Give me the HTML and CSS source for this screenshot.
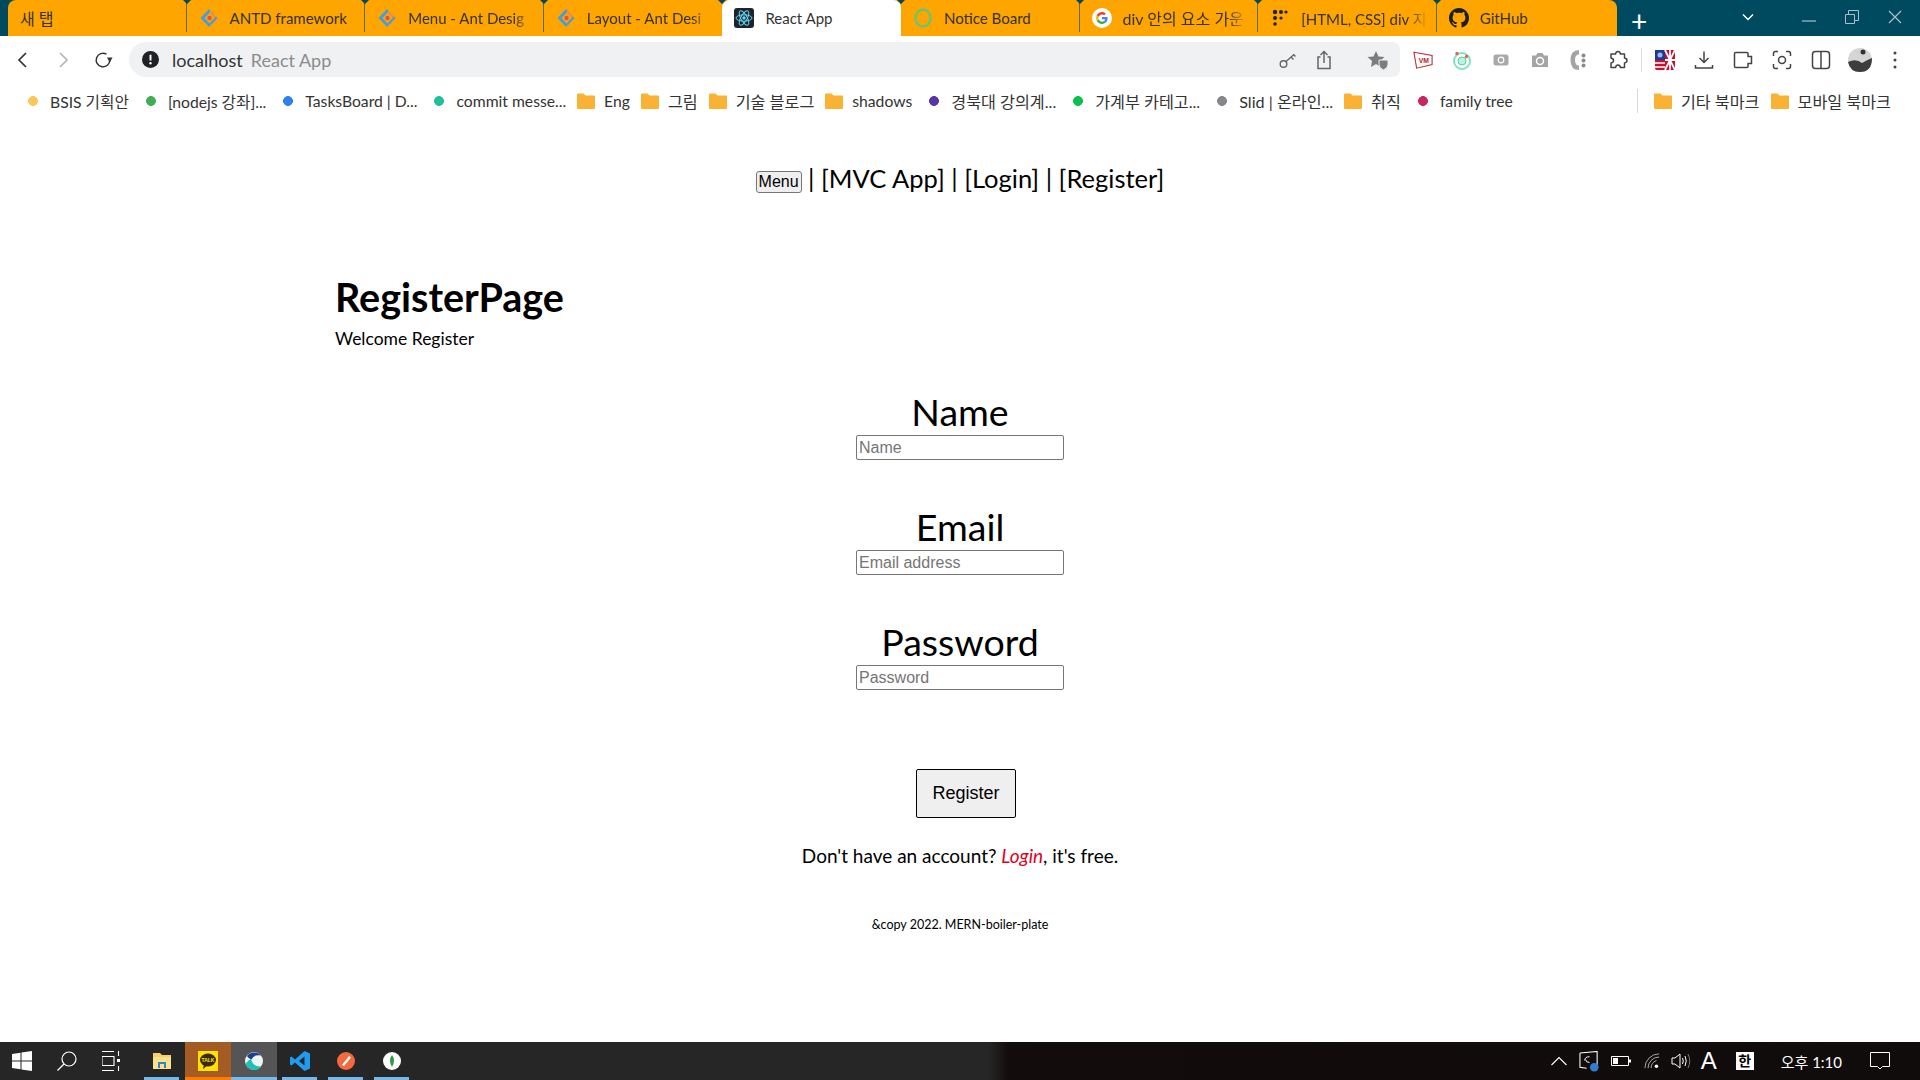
FILE: index.html
```html
<!DOCTYPE html>
<html lang="en">
<head>
    <meta charset="UTF-8">
    <title>React App</title>
    <link rel="stylesheet" href="styles.css">
</head>
<body>
    <svg class="defs" width="0" height="0">
        <defs>
            <symbol id="ant" viewBox="0 0 20 20">
                <path d="M11.500 2.500 L10 1 L1.500 10 L10 19 L12 17 L5.500 10 L10 5.500 Z" fill="#3f9fe0"/>
                <path d="M12 3 L18.500 10 L12 17 L10.500 15.500 L15.500 10 L10.500 4.500 Z" fill="#ef8a4a"/>
                <path d="M12 17 L18.500 10 L17 8.500 L10.500 15.500 Z" fill="#3f9fe0"/>
                <circle cx="10.500" cy="10" r="2.200" fill="#e8523a"/>
            </symbol>
            <symbol id="folder" viewBox="0 0 18 16">
                <path d="M0 1.5 Q0 .5 1 .5 H6.5 L8.5 2.5 H17 Q18 2.5 18 3.5 V15 Q18 16 17 16 H1 Q0 16 0 15 Z" fill="#f9b233"/>
            </symbol>
        </defs>
    </svg>

    <div class="tabstrip">
        <div class="tabs">
            <div class="tab sep"><span class="tab-title ko">새 탭</span></div>
            <div class="tab sep"><svg class="favicon"><use href="#ant"/></svg><span class="tab-title">ANTD framework</span></div>
            <div class="tab sep"><svg class="favicon"><use href="#ant"/></svg><span class="tab-title fade">Menu - Ant Desig</span></div>
            <div class="tab"><svg class="favicon"><use href="#ant"/></svg><span class="tab-title fade">Layout - Ant Desi</span></div>
            <div class="tab active">
                <svg class="favicon" viewBox="0 0 20 20">
                    <rect width="20" height="20" rx="3" fill="#20232a"/>
                    <g fill="none" stroke="#61dafb" stroke-width="1">
                        <ellipse cx="10" cy="10" rx="8" ry="3.2"/>
                        <ellipse cx="10" cy="10" rx="8" ry="3.2" transform="rotate(60 10 10)"/>
                        <ellipse cx="10" cy="10" rx="8" ry="3.2" transform="rotate(120 10 10)"/>
                    </g>
                    <circle cx="10" cy="10" r="1.7" fill="#61dafb"/>
                </svg>
                <span class="tab-title">React App</span>
            </div>
            <div class="tab sep">
                <svg class="favicon" viewBox="0 0 20 20"><ellipse cx="10" cy="10" rx="7.5" ry="8.5" fill="none" stroke="#6cc56f" stroke-width="2.6"/></svg>
                <span class="tab-title">Notice Board</span>
            </div>
            <div class="tab sep">
                <svg class="favicon" viewBox="0 0 20 20">
                    <circle cx="10" cy="10" r="10" fill="#fff"/>
                    <path d="M15.6 10.2c0-.5 0-.9-.1-1.3H10v2.4h3.2c-.1.8-.6 1.4-1.2 1.8l1.9 1.5c1.1-1 1.7-2.500 1.700-4.400z" fill="#4285f4"/>
                    <path d="M10 16c1.600 0 2.900-.5 3.900-1.400L12 13.100c-.5.400-1.200.600-2 .600-1.500 0-2.800-1-3.300-2.400l-2 1.500C5.700 14.800 7.700 16 10 16z" fill="#34a853"/>
                    <path d="M6.700 11.300c-.3-.8-.3-1.800 0-2.600l-2-1.500c-.9 1.700-.9 3.900 0 5.600z" fill="#fbbc05"/>
                    <path d="M10 6.400c.9 0 1.600.3 2.200.9l1.700-1.700C12.900 4.600 11.600 4 10 4 7.700 4 5.700 5.300 4.700 7.200l2 1.500C7.200 7.400 8.500 6.400 10 6.400z" fill="#ea4335"/>
                </svg>
                <span class="tab-title fade ko">div 안의 요소 가운</span>
            </div>
            <div class="tab sep">
                <svg class="favicon" viewBox="0 0 20 20" fill="#222">
                    <circle cx="5" cy="4" r="2.200"/><circle cx="11" cy="4" r="2"/><circle cx="16" cy="4" r="1.600"/>
                    <circle cx="5" cy="10" r="2"/><circle cx="11" cy="10" r="1.600"/><circle cx="5" cy="16" r="1.800"/>
                </svg>
                <span class="tab-title fade">[HTML, CSS] div 지</span>
            </div>
            <div class="tab last">
                <svg class="favicon" viewBox="0 0 16 16"><path fill="#1b1f23" d="M8 0C3.580 0 0 3.580 0 8c0 3.540 2.290 6.530 5.470 7.590.4.070.55-.17.55-.38 0-.19-.01-.82-.01-1.490-2.010.37-2.530-.49-2.690-.94-.09-.23-.48-.94-.82-1.130-.28-.15-.68-.52-.01-.53.63-.01 1.080.58 1.230.82.720 1.210 1.870.870 2.330.660.070-.520.280-.870.510-1.070-1.780-.200-3.640-.890-3.640-3.950 0-.870.310-1.590.820-2.150-.080-.200-.360-1.020.080-2.120 0 0 .670-.210 2.200.820.640-.180 1.320-.270 2-.270s1.360.090 2 .270c1.530-1.040 2.200-.820 2.200-.820.440 1.100.160 1.920.080 2.120.510.560.820 1.270.820 2.150 0 3.070-1.870 3.750-3.650 3.950.290.250.540.730.540 1.480 0 1.070-.010 1.930-.010 2.200 0 .210.150.460.550.380A8.010 8.010 0 0 0 16 8c0-4.420-3.580-8-8-8z"/></svg>
                <span class="tab-title">GitHub</span>
            </div>
        </div>
        <span class="new-tab">+</span>
        <div class="win-controls">
            <svg class="win-ic chev" viewBox="0 0 14 14"><path d="M2 4.500 L7 9.500 L12 4.500" fill="none" stroke="#fff" stroke-width="1.400"/></svg>
            <svg class="win-ic dim" viewBox="0 0 14 14"><path d="M0 11 H14" stroke="#8fb0bb" stroke-width="1.400"/></svg>
            <svg class="win-ic dim" viewBox="0 0 14 14"><path d="M.5 4.500 H9.500 V13.500 H.5 Z M3.500 4.500 V.5 H13.500 V10.500 H9.500" fill="none" stroke="#a9c2ca"/></svg>
            <svg class="win-ic dim" viewBox="0 0 14 14"><path d="M1 1 L13 13 M13 1 L1 13" stroke="#a9c2ca" stroke-width="1.200"/></svg>
        </div>
    </div>

    <div class="toolbar">
        <svg class="nav-ic" viewBox="0 0 20 20"><path d="M13 3 L6 10 L13 17" fill="none" stroke="#333" stroke-width="1.700"/></svg>
        <svg class="nav-ic" viewBox="0 0 20 20"><path d="M7 3 L14 10 L7 17" fill="none" stroke="#b5b5b5" stroke-width="1.700"/></svg>
        <svg class="nav-ic" viewBox="0 0 20 20"><path d="M16.800 10 A6.800 6.800 0 1 1 13.500 4.200" fill="none" stroke="#333" stroke-width="1.500"/><path d="M14 7.500 L19.500 7.500 L16.800 12.500 Z" fill="#333"/></svg>
        <div class="omnibox">
            <svg class="info" viewBox="0 0 16 16"><circle cx="8" cy="8" r="8" fill="#202124"/><path d="M8 3.500 V9" stroke="#fff" stroke-width="1.800"/><circle cx="8" cy="11.500" r="1.100" fill="#fff"/></svg>
            <span class="host">localhost</span>
            <span class="page-title">React App</span>
            <div class="omni-right">
                <svg class="tool-ic key" viewBox="0 0 20 20"><circle cx="5.500" cy="14" r="3.300" fill="none" stroke="#666" stroke-width="1.400"/><path d="M8 11.500 L16 4.500 M13 7 L15.500 9.500 M15.500 4.500 L17.500 6.500" fill="none" stroke="#666" stroke-width="1.400"/></svg>
                <svg class="tool-ic share" viewBox="0 0 20 20"><path d="M6.500 7 H4 V18.500 H16 V7 H13.500 M10 13 V1.500 M6.500 5 L10 1.500 L13.500 5" fill="none" stroke="#666" stroke-width="1.500"/></svg>
                <svg class="tool-ic star" viewBox="0 0 22 20"><path d="M9 1 L11.500 6.500 L17.500 7 L13 11 L14 17 L9 14 L4 17 L5 11 L.5 7 L6.500 6.500 Z" fill="#7d7d7d"/><path d="M12 10 H21 V14.500 Q21 18 16.500 20 Q12 18 12 14.500 Z" fill="#7d7d7d" stroke="#eff1f3"/></svg>
            </div>
        </div>
        <div class="ext-icons">
            <svg class="tool-ic" viewBox="0 0 22 20"><path d="M1 1.500 L21 5 V15 L4 19 Z" fill="#fff" stroke="#b5303a" stroke-width="1.200"/><text x="12" y="13.500" class="vm">VM</text></svg>
            <svg class="tool-ic" viewBox="0 0 20 20"><circle cx="10" cy="11" r="8" fill="none" stroke="#7fe3c0" stroke-width="2"/><circle cx="10" cy="11" r="4" fill="#bdf3dd" stroke="#55cfa0"/><circle cx="5" cy="3.500" r="1.700" fill="#e0664f"/><circle cx="14.500" cy="6.500" r="1.700" fill="#e0664f"/></svg>
            <svg class="tool-ic" viewBox="0 0 20 20"><rect x="2.500" y="4.500" width="15" height="11" rx="2.500" fill="#a9a9a9"/><circle cx="10" cy="10" r="2.800" fill="none" stroke="#fff" stroke-width="1.200"/></svg>
            <svg class="tool-ic" viewBox="0 0 20 20"><path d="M2 5.500 H6 L7.500 3 H12.500 L14 5.500 H18 V17 H2 Z" fill="#a4a4a4"/><circle cx="10" cy="11" r="3.500" fill="#a4a4a4" stroke="#fff" stroke-width="1.500"/></svg>
            <svg class="tool-ic" viewBox="0 0 20 20"><path d="M10 0 Q1.500 0 1.500 10 Q1.500 20 10 20 V15.500 Q6 15.500 6 10 Q6 4.500 10 4.500 Z" fill="#a4a4a4"/><g fill="#8a8a8a"><circle cx="14.500" cy="5.500" r="2"/><circle cx="14.500" cy="10.500" r="2"/><circle cx="14.500" cy="15.500" r="2"/></g></svg>
            <svg class="tool-ic" viewBox="0 0 20 20"><path d="M7.500 4 Q8 1.500 10 1.500 Q12 1.500 12.500 4 H16.500 V8 Q19 8.500 19 10.500 Q19 12.500 16.500 13 V17.500 H12.500 Q12 15 10 15 Q8 15 7.500 17.500 H3 V13 Q5.500 12.500 5.500 10.500 Q5.500 8.500 3 8 V4 Z" fill="none" stroke="#444" stroke-width="1.500" stroke-linejoin="round"/></svg>
            <span class="tool-sep"></span>
            <svg class="tool-ic" viewBox="0 0 20 20"><rect width="20" height="20" rx="2" fill="#c8102e"/><rect width="10" height="10" fill="#1f3a93"/><path d="M10 0 L20 20 M20 0 L10 20 M15 0 V20 M10 10 H20" stroke="#fff" stroke-width="1.800"/><path d="M0 13 H10 M0 17 H10" stroke="#fff" stroke-width="1.400"/><circle cx="5" cy="5" r="2.500" fill="#9ab8ff"/></svg>
            <svg class="tool-ic" viewBox="0 0 20 20"><path d="M10 1.500 V12.500 M5.500 8 L10 12.500 L14.500 8 M1.500 15 V18 H18.500 V15" fill="none" stroke="#444" stroke-width="1.500"/></svg>
            <svg class="tool-ic" viewBox="0 0 20 20"><path d="M15 6.500 V3.500 Q15 2.500 14 2.500 H2.500 Q1.500 2.500 1.500 3.500 V16.500 Q1.500 17.500 2.500 17.500 H14 Q15 17.500 15 16.500 V13.500 L18.500 13.500 V6.500 Z" fill="none" stroke="#444" stroke-width="1.500"/></svg>
            <svg class="tool-ic" viewBox="0 0 20 20"><path d="M1.500 6 V3.500 Q1.500 1.500 3.500 1.500 H6 M14 1.500 H16.500 Q18.500 1.500 18.500 3.500 V6 M18.500 14 V16.500 Q18.500 18.500 16.500 18.500 H14 M6 18.500 H3.500 Q1.500 18.500 1.500 16.500 V14" fill="none" stroke="#444" stroke-width="1.500"/><circle cx="10" cy="10" r="3.500" fill="none" stroke="#444" stroke-width="1.500"/></svg>
            <svg class="tool-ic" viewBox="0 0 20 20"><rect x="1.500" y="1.500" width="17" height="17" rx="3" fill="none" stroke="#444" stroke-width="1.500"/><path d="M10 1.500 V18.500" stroke="#444" stroke-width="1.500"/></svg>
            <svg class="tool-ic avatar" viewBox="0 0 24 24"><circle cx="12" cy="12" r="12" fill="#d5d5d5"/><path d="M0 14 Q8 10 14 15 Q19 12 24 10 Q24 24 12 24 Q2 24 0 14 Z" fill="#3d3d3d"/><circle cx="15" cy="4" r="2.500" fill="#333"/></svg>
            <svg class="tool-ic dots" viewBox="0 0 4 20"><g fill="#444"><circle cx="2" cy="3" r="1.500"/><circle cx="2" cy="10" r="1.500"/><circle cx="2" cy="17" r="1.500"/></g></svg>
        </div>
    </div>

    <div class="bookmarks">
        <span class="bm"><i class="dot c-yellow"></i>BSIS 기획안</span>
        <span class="bm"><i class="dot c-green"></i>[nodejs 강좌]...</span>
        <span class="bm"><i class="dot c-blue"></i>TasksBoard | D...</span>
        <span class="bm"><i class="dot c-teal"></i>commit messe...</span>
        <span class="bm"><svg class="folder"><use href="#folder"/></svg>Eng</span>
        <span class="bm"><svg class="folder"><use href="#folder"/></svg><span class="ko">그림</span></span>
        <span class="bm"><svg class="folder"><use href="#folder"/></svg><span class="ko">기술 블로그</span></span>
        <span class="bm"><svg class="folder"><use href="#folder"/></svg>shadows</span>
        <span class="bm"><i class="dot c-purple"></i><span class="ko">경북대 강의계...</span></span>
        <span class="bm"><i class="dot c-lime"></i><span class="ko">가계부 카테고...</span></span>
        <span class="bm"><i class="dot c-gray"></i><span class="ko">Slid | 온라인...</span></span>
        <span class="bm"><svg class="folder"><use href="#folder"/></svg><span class="ko">취직</span></span>
        <span class="bm"><i class="dot c-pink"></i>family tree</span>
        <span class="bm-right">
            <span class="bm"><svg class="folder"><use href="#folder"/></svg><span class="ko">기타 북마크</span></span>
            <span class="bm"><svg class="folder"><use href="#folder"/></svg><span class="ko">모바일 북마크</span></span>
        </span>
    </div>

    <div class="page">
        <nav class="site-nav">
            <button class="menu-btn">Menu</button> | [MVC App] | [Login] | [Register]
        </nav>
        <main class="content">
            <h1>RegisterPage</h1>
            <p class="welcome">Welcome Register</p>
            <form class="reg-form">
                <div class="field">
                    <label for="name">Name</label>
                    <input id="name" type="text" placeholder="Name">
                </div>
                <div class="field">
                    <label for="email">Email</label>
                    <input id="email" type="email" placeholder="Email address">
                </div>
                <div class="field">
                    <label for="password">Password</label>
                    <input id="password" type="password" placeholder="Password">
                </div>
                <button class="submit" type="button">Register</button>
            </form>
            <p class="account">Don't have an account? <a class="login-link">Login</a>, it's free.</p>
        </main>
        <footer class="copy">&amp;copy 2022. MERN-boiler-plate</footer>
    </div>

    <div class="taskbar">
        <div class="task-left">
            <svg class="sys start" viewBox="0 0 20 20"><path d="M0 3 L8.500 1.800 V9.500 H0 Z M9.500 1.600 L20 0 V9.500 H9.500 Z M0 10.500 H8.500 V18.200 L0 17 Z M9.500 10.500 H20 V20 L9.500 18.400 Z" fill="#fff"/></svg>
            <svg class="sys search" viewBox="0 0 20 20"><circle cx="12" cy="8" r="7" fill="none" stroke="#fff" stroke-width="1.200"/><path d="M7 13 L.5 19.500" stroke="#fff" stroke-width="1.200"/></svg>
            <svg class="sys taskview" viewBox="0 0 20 20"><path d="M0 .5 H12 M0 19.500 H12 M0 5.500 H12 V14.500 H0 Z M16.500 0 V5 M16.500 15 V20" fill="none" stroke="#fff" stroke-width="1.100"/><rect x="15" y="8" width="3" height="3" fill="#fff"/></svg>
            <div class="app running">
                <svg class="app-ic" viewBox="0 0 20 20"><path d="M1 2 H8 L10 4 H19 V18 H1 Z" fill="#f6cf66"/><rect x="1" y="6" width="18" height="12" fill="#fbe08e"/><path d="M6 17 V11 H14 V17 H12 V13 H8 V17 Z" fill="#2f86c9"/></svg>
            </div>
            <div class="app kakao">
                <svg class="app-ic" viewBox="0 0 20 20"><rect width="20" height="20" fill="#ffe100"/><ellipse cx="10" cy="9" rx="8" ry="6.500" fill="#3a2a1b"/><path d="M6 13 L5 18 L10 14 Z" fill="#3a2a1b"/><text x="10" y="11" class="talk">TALK</text></svg>
            </div>
            <div class="app whale">
                <svg class="app-ic" viewBox="0 0 20 20"><circle cx="10" cy="10" r="9" fill="#eef6f4"/><path d="M1.500 13 A9 9 0 0 0 17 15.500 Q9 16 7 8 Q4 9 1.500 13 Z" fill="#1fc0b5"/><path d="M3 5 A9 9 0 0 1 17 4.500 Q10 3 7.500 8.500 Q4.500 8 3 5 Z" fill="#1d3f8f"/></svg>
            </div>
            <div class="app running">
                <svg class="app-ic" viewBox="0 0 20 20"><path d="M14.500 0 L20 2.500 V17.500 L14.500 20 L5 11.500 L1.500 14.500 L0 13.500 V6.500 L1.500 5.500 L5 8.500 Z M14.500 5.500 L9 10 L14.500 14.500 Z" fill="#1f9cf0"/></svg>
            </div>
            <div class="app running">
                <svg class="app-ic" viewBox="0 0 20 20"><circle cx="10" cy="10" r="9" fill="#f4693d"/><path d="M6 14 L13 5 L15 6.500 L8 15 Z" fill="#fff"/></svg>
            </div>
            <div class="app running">
                <svg class="app-ic" viewBox="0 0 20 20"><circle cx="10" cy="10" r="9" fill="#fff"/><path d="M10 4 Q14 9 10 16 Q6 9 10 4 Z" fill="#2f9a4a"/></svg>
            </div>
        </div>
        <div class="tray">
            <svg class="tray-ic chevron" viewBox="0 0 16 10"><path d="M.5 9 L8 1.500 L15.500 9" fill="none" stroke="#fff" stroke-width="1.100"/></svg>
            <svg class="tray-ic sync" viewBox="0 0 22 22"><path d="M1 2 L19 .5 V16 M1 2 V17 L8 18" fill="none" stroke="#fff" stroke-width="1.100"/><path d="M6 10 Q6 6 11 6 M11 12 Q7 12 7 9" fill="none" stroke="#fff"/><circle cx="16" cy="17" r="4.500" fill="#2d7cd6"/></svg>
            <svg class="tray-ic batt" viewBox="0 0 20 12"><path d="M.5 1.500 H17.500 V10.500 H.5 Z" fill="none" stroke="#fff"/><rect x="2" y="3" width="5" height="6" fill="#fff"/><rect x="18" y="4.500" width="2" height="3" fill="#fff"/></svg>
            <svg class="tray-ic wifi" viewBox="0 0 18 18"><path d="M1 17 A16 16 0 0 1 17 1 M4.500 17 A12.500 12.500 0 0 1 17 4.500 M8 17 A9 9 0 0 1 14 8.500" fill="none" stroke="#bbb"/><circle cx="14" cy="15" r="2" fill="#fff"/></svg>
            <svg class="tray-ic vol" viewBox="0 0 20 16"><path d="M1 5 H4 L9 1 V15 L4 11 H1 Z" fill="none" stroke="#fff"/><path d="M11.500 5 Q13 8 11.500 11 M14 3 Q16.500 8 14 13" fill="none" stroke="#fff"/><path d="M17 1 Q20.500 8 17 15" fill="none" stroke="#777"/></svg>
            <span class="ime-a">A</span>
            <span class="ime-han">한</span>
            <span class="clock">오후 1:10</span>
            <svg class="tray-ic note" viewBox="0 0 20 18"><path d="M.5 .5 H19.500 V14.500 H12.500 L10 17 L7.500 14.500 H.5 Z" fill="none" stroke="#fff"/></svg>
        </div>
    </div>
</body>
</html>
```

FILE: styles.css
```css
* {
    box-sizing: border-box;
}

body {
    margin: 0;
    width: 1920px;
    height: 1080px;
    overflow: hidden;
    display: flex;
    flex-direction: column;
    font-family: "Lato", "Noto Sans CJK KR", sans-serif;
    background: #fff;
    color: #000;
}

.defs {
    position: absolute;
}

/* browser tabs */
.tabstrip {
    height: 36px;
    flex: none;
    display: flex;
    background: #004a5f;
    padding-left: 8px;
}

.tabs {
    display: flex;
    width: 1609px;
    background: #ffa500;
    border-radius: 8px 8px 0 0;
}

.tab {
    width: 178.6px;
    height: 36px;
    display: flex;
    align-items: center;
    padding-left: 12px;
    gap: 11px;
    position: relative;
    font-size: 15px;
    color: #333;
}

.tab.sep::after {
    content: "";
    position: absolute;
    right: 0;
    top: 2px;
    height: 30px;
    width: 1px;
    background: #5d6a3c;
}

.tab:not(.last)::before {
    content: "";
    position: absolute;
    right: -4px;
    top: 0;
    border: 4px solid transparent;
    border-top-color: #004a5f;
    border-bottom-width: 0;
    z-index: 1;
}

.tab.active {
    background: #fff;
    border-radius: 8px 8px 0 0;
}

.tab-title {
    white-space: nowrap;
    flex: 1;
    padding-right: 12px;
}

.tab-title.ko {
    font-size: 16px;
}

.tab-title.fade {
    -webkit-mask-image: linear-gradient(90deg, #000 78%, transparent 92%);
    mask-image: linear-gradient(90deg, #000 78%, transparent 92%);
}

.favicon {
    width: 20px;
    height: 20px;
    flex: none;
}

.new-tab {
    width: 44px;
    text-align: center;
    color: #fff;
    font-size: 28px;
    line-height: 42px;
}

.win-controls {
    flex: 1;
    display: flex;
    align-items: center;
    justify-content: flex-end;
    gap: 29px;
    padding: 0 18px 2px 0;
}

.win-ic {
    width: 14px;
    height: 14px;
}

.win-ic.chev {
    margin-right: 18px;
}

/* address bar row */
.toolbar {
    height: 41px;
    flex: none;
    display: flex;
    align-items: center;
    background: #fff;
    padding: 6px 0 0 13px;
    margin-top: 0;
}

.nav-ic {
    width: 20px;
    height: 20px;
    margin-right: 20px;
}

.omnibox {
    width: 1271px;
    height: 35px;
    margin-left: -4px;
    background: #eff1f3;
    border-radius: 18px 8px 8px 18px;
    display: flex;
    align-items: center;
    padding-left: 13px;
    font-size: 18px;
}

.info {
    width: 17px;
    height: 17px;
    margin-right: 13px;
}

.host {
    color: #333;
    margin-right: 8px;
}

.page-title {
    color: #8c8c8c;
}

.omni-right {
    margin-left: auto;
    display: flex;
    align-items: center;
    padding-right: 11px;
}

.share {
    margin-left: 16px;
}

.star {
    margin-left: 33px;
    width: 22px;
}

.tool-ic {
    height: 20px;
    flex: none;
}

.tool-ic:not(.star):not(.dots):not(.avatar) {
    width: 20px;
}

.vm {
    font-family: "Liberation Sans", sans-serif;
    font-size: 7.5px;
    font-weight: 700;
    fill: #c4161c;
    text-anchor: middle;
}

.ext-icons {
    display: flex;
    align-items: center;
    gap: 19px;
    margin-left: 13px;
}

.tool-sep {
    width: 1px;
    height: 24px;
    background: #ddd;
    margin: 0 -6px;
}

.avatar {
    width: 24px;
    height: 24px;
    margin: 0 -2px;
}

.dots {
    width: 4px;
    margin-left: 4px;
}

/* bookmarks */
.bookmarks {
    height: 48px;
    flex: none;
    display: flex;
    align-items: center;
    padding: 0 0 0 25px;
    gap: 14px;
    font-size: 15.7px;
    color: #333;
    white-space: nowrap;
}

.bm {
    display: flex;
    align-items: center;
    gap: 9px;
}

.bm .ko {
    font-size: 16.2px;
}

.dot {
    width: 16px;
    height: 10px;
    flex: none;
    background: radial-gradient(circle at center, var(--c) 4.6px, transparent 5.2px);
}

.c-yellow { --c: #f9c859; }
.c-green { --c: #3fae55; }
.c-blue { --c: #2f80f0; }
.c-teal { --c: #22c09a; }
.c-purple { --c: #5b34a8; }
.c-lime { --c: #0cc04c; }
.c-gray { --c: #85878b; }
.c-pink { --c: #c9265f; }

.folder {
    width: 18px;
    height: 16px;
    flex: none;
    margin-left: -3px;
}

.bm-right {
    display: flex;
    gap: 14px;
    margin-left: auto;
    padding: 0 29px 0 19px;
    border-left: 1px solid #d8d8d8;
}

/* page */
.page {
    flex: 1;
    padding-top: 35px;
}

.site-nav {
    text-align: center;
    font-size: 25.5px;
    line-height: 36px;
}

.menu-btn {
    font-family: "Liberation Sans", sans-serif;
    font-size: 16px;
    padding: 1px 2px;
    background: #efefef;
    border: 1px solid #767676;
    border-radius: 3px;
    color: #000;
    vertical-align: 1px;
}

.content {
    width: 1250px;
    margin: 0 auto;
    padding-top: 76px;
}

h1 {
    margin: 0;
    font-size: 39.5px;
    line-height: 50px;
    font-weight: 700;
}

.welcome {
    margin: 4px 0 0;
    font-size: 17.5px;
    line-height: 26px;
}

.reg-form {
    margin-top: 37px;
    display: flex;
    flex-direction: column;
    align-items: center;
}

.field {
    display: flex;
    flex-direction: column;
    align-items: center;
    margin-bottom: 44px;
}

.field label {
    font-size: 37.5px;
    line-height: 46px;
}

.field input {
    width: 208px;
    height: 25px;
    padding: 1px 2px;
    font-family: "Liberation Sans", sans-serif;
    font-size: 16px;
    border: 1px solid #767676;
    border-radius: 2px;
}

.field input::placeholder {
    color: #757575;
}

.submit {
    width: 100px;
    height: 49px;
    margin: 35px 0 0 12px;
    font-family: "Liberation Sans", sans-serif;
    font-size: 18px;
    background: #efefef;
    border: 1px solid #000;
    border-radius: 2px;
    color: #000;
}

.account {
    margin: 25px 0 0;
    text-align: center;
    font-size: 19px;
    line-height: 26px;
}

.login-link {
    color: #e0001a;
    font-style: italic;
}

.copy {
    margin-top: 48px;
    text-align: center;
    font-size: 12.5px;
    line-height: 16px;
}

/* windows taskbar */
.taskbar {
    height: 38px;
    flex: none;
    display: flex;
    justify-content: space-between;
    background: linear-gradient(90deg, #262626 0, #262626 51.5%, #120d0c 52.5%, #100c0b 100%);
}

.task-left {
    display: flex;
    align-items: center;
}

.sys {
    width: 20px;
    height: 20px;
    flex: none;
}

.start { margin-left: 12px; }
.search { margin-left: 25px; }
.taskview { margin: 0 16.5px 0 25px; }

.app {
    height: 38px;
    width: 46px;
    display: flex;
    align-items: center;
    justify-content: center;
    position: relative;
}

.app.running::after {
    content: "";
    position: absolute;
    left: 5px;
    right: 6px;
    bottom: 0;
    height: 3px;
    background: #76b9ed;
}

.kakao {
    background: #a45c24;
    box-shadow: inset 0 -3px 0 #ff7a00;
}

.whale {
    background: #555;
    box-shadow: inset 0 -3px 0 #76b9ed;
}

.app-ic {
    width: 20px;
    height: 20px;
}

.talk {
    font-family: "Liberation Sans", sans-serif;
    font-size: 5px;
    font-weight: 700;
    fill: #ffe100;
    text-anchor: middle;
}

.tray {
    display: flex;
    align-items: center;
    color: #fff;
    padding-right: 30px;
}

.tray-ic {
    flex: none;
}

.chevron { width: 16px; height: 10px; }
.sync { width: 21px; height: 21px; margin-left: 12px; }
.batt { width: 20px; height: 12px; margin-left: 11px; }
.wifi { width: 16px; height: 16px; margin-left: 13px; }
.vol { width: 20px; height: 16px; margin-left: 11px; }
.note { width: 20px; height: 18px; margin-left: 28px; }

.ime-a {
    font-family: "Liberation Sans", sans-serif;
    font-size: 24px;
    margin-left: 10px;
}

.ime-han {
    background: #fff;
    color: #000;
    font-size: 14px;
    font-weight: 700;
    width: 18px;
    height: 18px;
    line-height: 18px;
    text-align: center;
    margin-left: 19px;
}

.clock {
    font-size: 15px;
    margin-left: 27px;
}
```
